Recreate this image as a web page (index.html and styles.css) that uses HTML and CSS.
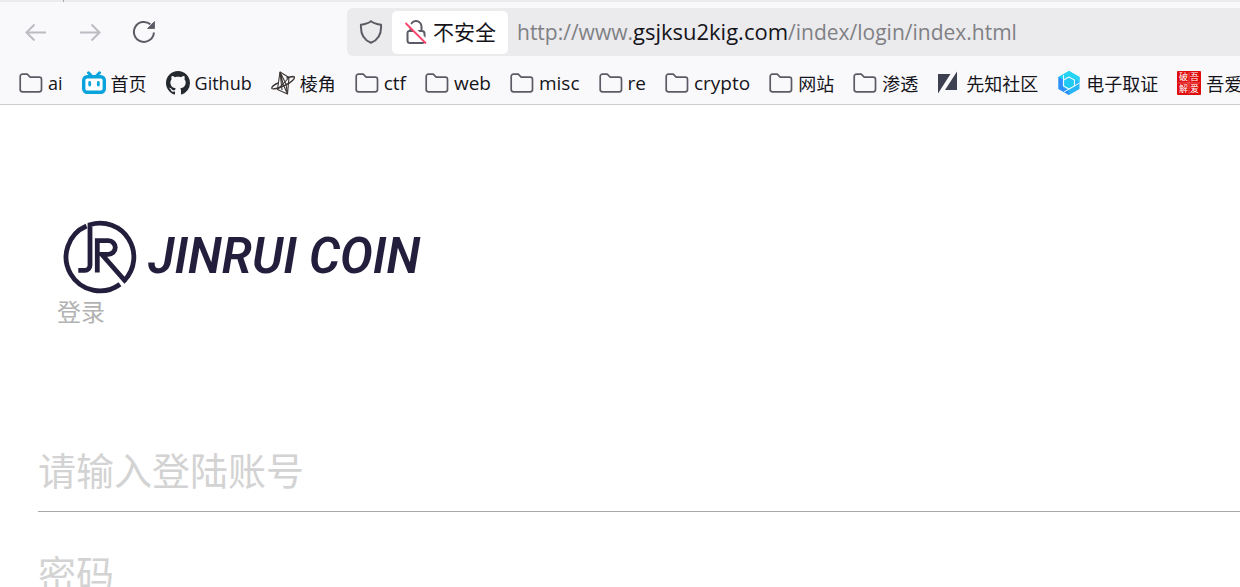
FILE: index.html
```
<!DOCTYPE html>
<html lang="zh-CN">
<head>
<meta charset="utf-8">
<meta name="viewport" content="width=device-width, initial-scale=1">
<title>登录</title>
<link rel="stylesheet" href="styles.css">
</head>
<body>
<svg class="defs" aria-hidden="true">
  <symbol id="folder" viewBox="0 0 24 24"><path d="M1.200 18.500V5.500a2.300 2.300 0 0 1 2.300-2.300h4.700l3 2.900h9a2.300 2.300 0 0 1 2.300 2.300v10.100a2.300 2.300 0 0 1-2.300 2.300H3.500a2.300 2.300 0 0 1-2.300-2.300z" fill="none" stroke="#5b5b66" stroke-width="1.700"/></symbol>
</svg>
<header class="browser">
  <div class="tabstrip"><span class="tab-edge"></span></div>
  <nav class="toolbar" aria-label="导航">
    <div class="nav-buttons">
      <button class="nav-button dim" aria-label="后退"><svg viewBox="0 0 24 24"><path d="M22 12.500H2.500M10.500 4.500l-8 8 8 8" /></svg></button>
      <button class="nav-button dim" aria-label="前进"><svg viewBox="0 0 24 24"><path d="M2 12.500h19.500M13.500 4.500l8 8-8 8" /></svg></button>
      <button class="nav-button" aria-label="刷新"><svg viewBox="0 0 24 24"><path d="M21.900 12.500a10 10 0 1 1-3.500-8.200"/><path d="M22.500 1.500v7h-7z" fill="currentColor" stroke-width="0.800"/></svg></button>
    </div>
    <div class="urlbar">
      <button class="shield" aria-label="跟踪保护"><svg viewBox="0 0 24 24"><path d="M12 1.200c2.500 1.900 6 3 10 3.600.6 8.200-2.400 15-10 18-7.600-3-10.600-9.800-10-18 4-.6 7.500-1.700 10-3.600z" /></svg></button>
      <button class="identity"><svg viewBox="0 0 24 24"><path d="M6.500 11V6.500a5.500 5.500 0 0 1 11 0V11M5 11h13a2.500 2.500 0 0 1 2.500 2.500v7a2.500 2.500 0 0 1-2.500 2.500H6a2.500 2.500 0 0 1-2.500-2.500V13A2 2 0 0 1 5 11z"/><path d="M3 2.500L23.500 22" stroke="#fff" stroke-width="3.500"/><path d="M1.500 3l20.500 20.500" stroke="#ff4069" stroke-width="1.800"/></svg><span>不安全</span></button>
      <div class="url">http://www.<span class="host">gsjksu2kig.com</span>/index/login/index.html</div>
    </div>
  </nav>
  <nav class="bookmarks" aria-label="书签">
    <a href="#"><svg><use href="#folder"/></svg>ai</a>
    <a href="#"><svg viewBox="0 0 24 24"><path d="M6.500 1.800l3 3.200M17.500 1.800l-3 3.200" stroke="#0aa3dc" stroke-width="3" stroke-linecap="round"/><rect x="1.700" y="5.700" width="20.600" height="15.600" rx="3.500" fill="#fff" stroke="#0aa3dc" stroke-width="3.400"/><path d="M7.700 11.500v2.500M16.300 11.500v2.500" stroke="#0aa3dc" stroke-width="2.800" stroke-linecap="round"/></svg>首页</a>
    <a href="#"><svg viewBox="0 0 16 16"><path fill="#24292f" d="M8 0C3.580 0 0 3.580 0 8c0 3.540 2.290 6.530 5.470 7.590.4.070.55-.17.55-.38 0-.19-.01-.82-.01-1.490-2.010.37-2.530-.49-2.690-.94-.09-.23-.48-.94-.82-1.130-.28-.15-.68-.52-.01-.53.63-.01 1.080.58 1.230.82.72 1.210 1.870.87 2.330.66.070-.52.28-.87.51-1.070-1.780-.2-3.640-.89-3.640-3.950 0-.87.31-1.590.82-2.150-.08-.2-.36-1.020.08-2.120 0 0 .67-.21 2.200.82.640-.18 1.320-.27 2-.27s1.360.09 2 .27c1.530-1.040 2.200-.82 2.200-.82.440 1.100.160 1.920.080 2.120.510.560.820 1.270.820 2.150 0 3.070-1.870 3.750-3.650 3.950.290.250.540.730.540 1.480 0 1.070-.010 1.930-.010 2.200 0 .210.150.460.550.380A8.010 8.010 0 0 0 16 8c0-4.420-3.580-8-8-8z"/></svg>Github</a>
    <a href="#"><svg viewBox="0 0 24 24" fill="none" stroke="#3c3634" stroke-width="1.100" stroke-linejoin="round"><path d="M9 1l-2.500 17.500L16.500 23 18 6.500z"/><path d="M9 1l3 12 4.500 10M6.500 18.500L12 13l6-6.500M9 1l2 18M9 1l6 12 1.500 10"/><path d="M7 12c-4 2-6.500 4-6.200 5.200.5 1.500 7 .2 13.500-3S24 7.200 23.500 6.300C23 5.300 19 5.700 15.500 7" stroke-width="1.400"/></svg>棱角</a>
    <a class="word" href="#"><svg><use href="#folder"/></svg>ctf</a>
    <a class="word" href="#"><svg><use href="#folder"/></svg>web</a>
    <a class="word" href="#"><svg><use href="#folder"/></svg>misc</a>
    <a class="word" href="#"><svg><use href="#folder"/></svg>re</a>
    <a class="word" href="#"><svg><use href="#folder"/></svg>crypto</a>
    <a href="#"><svg><use href="#folder"/></svg>网站</a>
    <a href="#"><svg><use href="#folder"/></svg>渗透</a>
    <a href="#"><svg viewBox="0 0 24 24" fill="#3d4050"><path d="M1 3h12.500L1 22.500zM20 .5V19H8z"/></svg>先知社区</a>
    <a href="#"><svg viewBox="0 0 24 24"><path d="M12 0l10.500 6v12L12 24 1.500 18V6z" fill="#27b5f7"/><path d="M12 0l10.500 6v5L12 5 6 8.500 1.500 6z" fill="#25d5f5"/><path d="M1.500 6L6 8.500v8l6 3.500v4L1.500 18z" fill="#2f8dfb"/><path d="M12 6l5.500 3v6L12 18l-5.500-3V9z" fill="#20c9f3" stroke="#e8faff" stroke-width="1.200"/><path d="M6.500 9V4M17.500 15l5-3M12 18l-5 3" stroke="#e8faff" stroke-width="1"/></svg>电子取证</a>
    <a href="#"><svg viewBox="0 0 24 24"><rect width="24" height="24" rx="1" fill="#e00d0d"/><path d="M12 1v22M1 12h22" stroke="#f58c86" stroke-width=".6"/><g fill="#fff" font-size="9"><text x="2" y="9">破</text><text x="13" y="9">吾</text><text x="2" y="21">解</text><text x="13" y="21">爱</text></g></svg>吾爱破解</a>
  </nav>
</header>
<main class="page">
  <div class="brand">
    <svg class="mark" viewBox="0 0 74 74" fill="none" stroke="#231e3c" stroke-width="4.800"><path d="M23.500 6A33.800 33.800 0 1 0 57 64.200"/><path d="M15.300 50.300H22a5 5 0 0 0 5-5V4.700A33.800 33.800 0 0 1 61.500 60.300L38.700 34.300H45.300a7 7 0 0 0 7-7V27.700a7 7 0 0 0-7-7H34.300V52.500"/></svg>
    <span class="brand-name">JINRUI COIN</span>
  </div>
  <h1 class="title">登录</h1>
  <form class="login">
    <input class="field" type="text" aria-label="请输入登陆账号" placeholder="请输入登陆账号">
    <input class="field" type="password" aria-label="密码" placeholder="密码">
  </form>
</main>
</body>
</html>
```
FILE: styles.css
```
* { box-sizing: border-box; }
html { height: 100%; overflow: hidden; }
body {
  margin: 0;
  height: 100%;
  overflow: hidden;
  background: #fff;
  font-family: "Open Sans", "Noto Sans CJK SC", sans-serif;
}
button { border: 0; padding: 0; background: none; font: inherit; color: inherit; }
svg { flex: none; }
.defs { display: none; }

.browser { background: #f9f9fb; border-bottom: 1px solid #cccccf; overflow: hidden; }
.tabstrip { height: 2px; background: #ebebed; padding-left: 63px; }
.tab-edge { display: block; width: 1px; height: 2px; background: #a9a9ae; }
.toolbar { display: flex; align-items: center; padding-top: 6px; }
.nav-buttons { display: flex; gap: 30px; width: 347px; padding-left: 24px; }
.nav-button { display: flex; color: #5b5b66; }
.nav-button.dim { color: #bcbcc2; }
.nav-button svg, .shield svg, .identity svg {
  width: 24px; height: 24px; fill: none; stroke: currentColor; stroke-width: 2;
}
.urlbar {
  flex: 1;
  display: flex;
  align-items: center;
  height: 48px;
  background: #ebebed;
  border-radius: 6px 0 0 6px;
  white-space: nowrap;
}
.shield { display: flex; padding: 0 9px 0 12px; color: #5b5b66; }
.identity {
  display: flex;
  align-items: center;
  gap: 5px;
  height: 43px;
  padding: 0 12px;
  border-radius: 5px;
  background: #fff;
  font-size: 21px;
  line-height: 28px;
  color: #15141a;
}
.identity svg { color: #5b5b66; }
.url { padding: 0 0 2px 9px; font-size: 21px; color: #808084; }
.host { font-size: 22px; color: #15141a; }

.bookmarks { display: flex; gap: 19px; height: 48px; padding: 6px 0 0 19px; white-space: nowrap; }
.bookmarks a {
  flex: none;
  display: flex;
  align-items: center;
  gap: 5px;
  height: 42px;
  color: #15141a;
  font-size: 18px;
  text-decoration: none;
}
.bookmarks .word { font-size: 19px; }
.bookmarks svg { width: 24px; height: 24px; }

.page { padding: 115px 0 0 38px; }
.brand { display: flex; align-items: center; gap: 11px; padding-left: 25px; }
.mark { width: 74px; height: 74px; }
.brand-name {
  font-family: Roboto, sans-serif;
  font-size: 49px;
  font-style: italic;
  font-weight: 600;
  line-height: 74px;
  color: #231e3c;
  white-space: nowrap;
}
.title { margin: 0 0 0 19px; font-size: 24px; line-height: 36px; font-weight: 400; color: #b2b2b2; }
.login { display: flex; flex-direction: column; gap: 22px; padding-top: 101px; }
.field {
  width: 100%;
  height: 81px;
  padding: 0 0 5px;
  border: 0;
  border-bottom: 1px solid #aaa;
  border-radius: 0;
  outline: 0;
  background: none;
  font: 38px "Noto Sans CJK SC", sans-serif;
}
.field::placeholder { color: #d3d3d3; opacity: 1; }
```
